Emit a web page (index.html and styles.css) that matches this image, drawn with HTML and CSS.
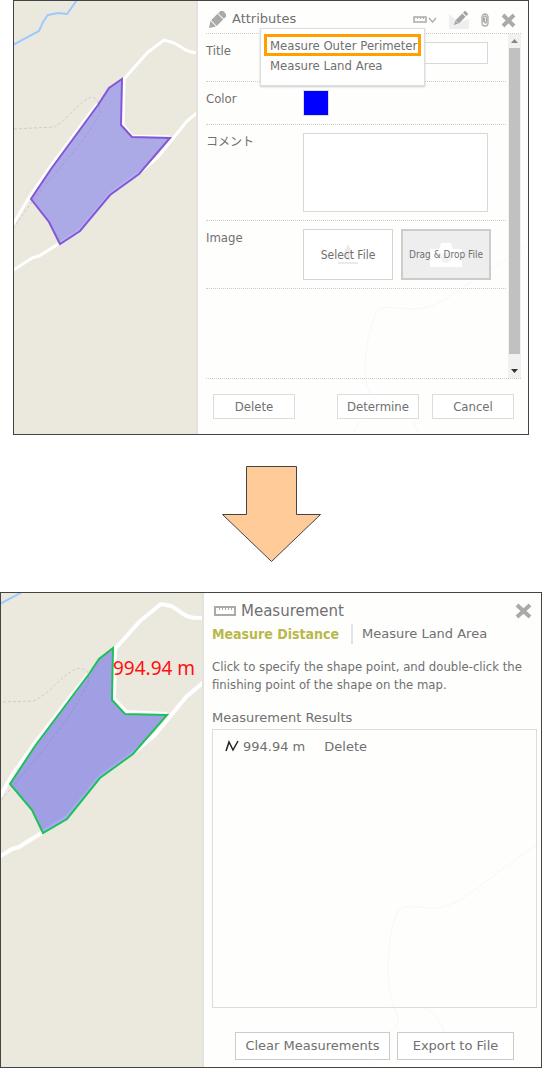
FILE: index.html
```html
<!DOCTYPE html>
<html lang="en">
<head>
<meta charset="utf-8">
<meta name="viewport" content="width=device-width, initial-scale=1">
<title>Attributes and Measurement</title>
<link rel="stylesheet" href="styles.css">
</head>
<body>
<main class="page">
  <section class="frame attributes">
    <svg class="map" viewBox="14 1 182 433" preserveAspectRatio="xMinYMin slice" role="img" aria-label="Map with the selected field">
      <path class="river" d="M13 45L39 31L43 22L48 15L58 13L67 14L77 0"/>
      <path class="road" d="M198 53C185 52 186 49 174 43L164 40L147 53L124 79L123 125L132 136L170 137"/>
      <path class="road" d="M12 226L30 196L50 167L97 104M12 271L32 258L39 256L60 243L80 230L110 194L139 173L158 157L187 121L198 112"/>
      <path class="trail" d="M14 129L54 127C66 121 80 101 91 97C99 98 100 106 100 112C88 142 43 181 14 228"/>
      <path class="field" d="M122 79L109 88L98 105L51 169L31 199L49 222L60 244L80 231L110 195L139 174L170 138L132 137L121 125Z"/>
    </svg>
    <div class="panel">
      <svg class="underlay" viewBox="198 1 330 433" preserveAspectRatio="xMinYMin slice" aria-hidden="true"><path d="M528 245L470 283C440 303 430 309 412 309C390 308 380 304 375 315C367 335 363 365 366 380L370 396M361 420L354 432M414 420L417 432"/></svg>
      <header class="panel-head">
        <svg width="18" height="18" viewBox="0 0 18 18" fill="#aaa"><g transform="translate(1 17) rotate(-45)"><path d="M0 0l6-4v8zM7-4h9v8H7zM17-4h4q1 0 1 1v6q0 1-1 1h-4z"/></g></svg>
        <h2 class="title">Attributes</h2>
        <div class="tools">
          <button class="tool" aria-label="Measure">
            <svg width="24" height="10" viewBox="0 0 24 10" fill="none" stroke="#aaa"><path d="M1 2h12v5H1z" stroke-width="1.500"/><path d="M4.500 2v2M7.500 2v2M10.500 2v2"/><path stroke-width="1.300" d="M16 3l3.500 4L23 3"/></svg>
          </button>
          <button class="tool" aria-label="Edit">
            <svg width="20" height="18" viewBox="0 0 20 18"><path fill="#efefef" d="M0 3l10 8L20 8v10H0z"/><g fill="#a4a4a4" transform="translate(5 14) rotate(-45)"><path d="M0 0l4-2v4zM4.500-2.300H14v4.600H4.500zM15-2.300h3v4.600h-3z"/></g></svg>
          </button>
          <button class="tool" aria-label="Attach">
            <svg width="8" height="14" viewBox="0 0 8 14" fill="none" stroke="#aaa"><path stroke-width="1.300" d="M2.500 9V4.500a1.500 1.500 0 0 1 3 0V9a1 1 0 0 1-2 0V5M1 4v6a3 3 0 0 0 6 0V4a3 3 0 0 0-6 0"/></svg>
          </button>
          <button class="tool" aria-label="Close">
            <svg width="15" height="15" viewBox="0 0 15 15" stroke="#aaa" stroke-width="4"><path d="M2 2l11 11M13 2L2 13"/></svg>
          </button>
        </div>
        <div class="menu">
          <button class="menu-item current">Measure Outer Perimeter</button>
          <button class="menu-item">Measure Land Area</button>
        </div>
      </header>
      <div class="scroller">
        <form class="rows">
          <div class="row row-title"><label for="f-title">Title</label><input class="text" id="f-title" type="text"></div>
          <div class="row row-color"><span>Color</span><button type="button" class="swatch" aria-label="Blue"></button></div>
          <div class="row row-comment"><label class="kana" for="f-comment" lang="ja">コメント</label><textarea class="text" id="f-comment"></textarea></div>
          <div class="row row-image"><span>Image</span>
            <div class="files">
              <button type="button" class="file">
                <svg class="file-bg" width="20" height="21" viewBox="0 0 20 21"><path fill="#ebebeb" d="M10 0l4 8h-2v8H8V8H6zM0 18h20v2H0z"/></svg>
                <span class="file-text">Select File</span>
              </button>
              <button type="button" class="file drop">
                <svg class="file-bg" width="32" height="24" viewBox="0 0 32 24"><path fill="#fff" d="M0 6h9l2-6h10l2 6h9v18H0z"/><circle cx="16" cy="15" r="5" fill="#f2f2f2"/></svg>
                <span class="file-text small">Drag &amp; Drop File</span>
              </button>
            </div>
          </div>
        </form>
        <div class="scrollbar">
          <svg width="13" height="14" viewBox="0 0 13 14"><path fill="#888" d="M3 9l3.500-4L10 9z"/></svg>
          <div class="thumb"></div>
          <svg width="13" height="14" viewBox="0 0 13 14"><path fill="#333" d="M3 5h7L6.500 9z"/></svg>
        </div>
      </div>
      <footer class="actions">
        <button class="btn">Delete</button>
        <button class="btn push">Determine</button>
        <button class="btn">Cancel</button>
      </footer>
    </div>
  </section>

  <svg class="arrow" width="101" height="98" viewBox="0 0 101 98"><path fill="#fc9" stroke="#444" d="M25.500 1.500h50v48h24L50.500 96.500 1.500 49.500h24z"/></svg>

  <section class="frame measurement">
    <div class="map-wrap">
      <svg class="map" viewBox="1 593 201 474" preserveAspectRatio="xMinYMin slice" role="img" aria-label="Map with the measured field">
        <path class="river" d="M0 604L24 591"/>
        <path class="road wide" d="M204 618C182 619 184 612 171 606L161 604L140 621L115 649L114 699L126 712L167 714"/>
        <path class="road wide" d="M-1 798L13 774L35 743L89 673M-1 857L12 849L19 847L43 832L67 817L100 777L133 753L154 736L186 697L204 682"/>
        <path class="trail" d="M3 702L33 701C48 696 65 671 79 668C88 669 90 675 88 683C68 726 28 766 1 801"/>
        <path class="field measured" d="M113 648L99 659L89 674L35 746L10 784L32 810L43 833L67 819L100 778L133 754L167 715L125 714L112 700Z"/>
      </svg>
      <span class="map-label">994.94 m</span>
    </div>
    <div class="panel">
      <svg class="underlay" viewBox="203 593 338 474" preserveAspectRatio="xMinYMin slice" aria-hidden="true"><path d="M541 841L500 870C470 893 455 906 435 908C410 908 400 902 395 915C386 940 384 985 393 1006C400 1020 398 1026 388 1032M424 1008C435 1013 440 1022 443 1032M374 1060L368 1067"/></svg>
      <header class="m-head">
        <svg width="22" height="10" viewBox="0 0 22 10" fill="none" stroke="#aaa"><path stroke-width="2" d="M1 1h20v8H1z"/><path d="M5.500 1v3M8.500 1v3M11.500 1v3M14.500 1v3M17.500 1v3"/></svg>
        <h2 class="m-title">Measurement</h2>
        <button class="tool m-close" aria-label="Close">
          <svg width="17" height="16" viewBox="0 0 17 16" stroke="#aaa" stroke-width="4"><path d="M2 2l13 12M15 2L2 14"/></svg>
        </button>
      </header>
      <nav class="tabs">
        <a class="tab active" href="#distance">Measure Distance</a>
        <a class="tab" href="#area">Measure Land Area</a>
      </nav>
      <p class="hint">Click to specify the shape point, and double-click the finishing point of the shape on the map.</p>
      <h3 class="m-sub">Measurement Results</h3>
      <div class="results">
        <div class="result">
          <svg width="14" height="14" viewBox="0 0 14 14" fill="none" stroke="#222" stroke-width="1.500"><path d="M1 11L4 2l4 8 5-9"/></svg>
          <span>994.94 m</span>
          <button class="link">Delete</button>
        </div>
      </div>
      <footer class="m-actions">
        <button class="btn big">Clear Measurements</button>
        <button class="btn big export">Export to File</button>
      </footer>
    </div>
  </section>
</main>
</body>
</html>
```
FILE: styles.css
```css
* { box-sizing: border-box; }

body {
  margin: 0;
  background: #fff;
  color: #707070;
  font: 13px/18px "DejaVu Sans Condensed", "DejaVu Sans", "Noto Sans CJK JP", sans-serif;
}

h2, h3, p { margin: 0; font-weight: normal; }
button, input, textarea { font: inherit; color: inherit; margin: 0; padding: 0; border-radius: 0; }
button { cursor: pointer; background: none; border: 0; }

.page { display: flex; flex-direction: column; }

.frame { display: flex; border: 1px solid #444; background: #fefefd; }
.attributes { margin: 0 13px; min-height: 435px; }
.measurement { min-height: 476px; }

.map { display: block; flex: none; width: 182px; height: auto; background: #ebe8de; }
.map path { fill: none; }
.map .river { stroke: #9ccaff; stroke-width: 2; }
.map .road { stroke: #fff; stroke-width: 3; stroke-linejoin: round; }
.map .wide { stroke-width: 4; }
.map .trail { stroke: #d0cdc2; stroke-dasharray: 3 2; }
.map .field { fill: #6464f0; fill-opacity: .47; stroke: #8457d6; stroke-width: 2; }
.map .measured { fill: #5555ea; fill-opacity: .5; stroke: #1ec05a; }

.panel { position: relative; z-index: 0; flex: 1; min-width: 0; display: flex; flex-direction: column; border-left: 2px solid #e4e1df; }
.underlay { position: absolute; inset: 0; z-index: -1; width: 100%; height: 100%; fill: none; stroke: #f7f7fd; }

.attributes .panel { padding: 0 7px 15px 8px; }
.panel-head { position: relative; display: flex; align-items: center; gap: 6px; height: 32px; padding: 6px 5px 0 2px; }
.title { padding-bottom: 2px; font: 13px/20px "DejaVu Sans", sans-serif; }
.tools { display: flex; align-items: center; gap: 12px; margin-left: auto; }
.tool { display: flex; }

.menu {
  position: absolute; top: 27px; left: 54px; z-index: 1;
  display: flex; flex-direction: column; align-items: flex-start;
  width: 165px; height: 58px; padding: 5px 3px;
  background: #fff; border: 1px solid #ddd; box-shadow: 0 1px 2px #ccc;
}
.menu-item { height: 19px; padding: 0 6px; white-space: nowrap; }
.menu-item.current { width: 157px; height: 22px; padding: 1px 3px 0; border: 3px solid #ffa000; line-height: 16px; text-align: left; }

.scroller { flex: 1; display: flex; border-top: 1px dotted #ccc; border-bottom: 1px dotted #ccc; }
.rows { flex: 1; padding-right: 2px; }
.row { display: grid; grid-template-columns: 97px 1fr; align-items: start; padding: 8px 0; border-bottom: 1px dotted #ccc; }
.row-title { height: 48px; }
.row-color { height: 43px; }
.row-comment { height: 96px; }
.row-image { height: 68px; }
.kana { font-size: 12px; }
.text { width: 185px; height: 22px; background: #fff; border: 1px solid #d8d8d8; }
textarea.text { height: 79px; resize: none; }
.swatch { width: 26px; height: 26px; background: #00f; border: 1px solid #ddd; }
.files { display: flex; gap: 8px; }
.file { display: grid; place-items: center; width: 90px; height: 51px; background: #fff; border: 1px solid #d4d4d4; font-size: 12px; }
.drop { background: #eee; border: 2px solid #ccc; }
.file-bg, .file-text { grid-area: 1 / 1; }
.small { font-size: 10px; }

.scrollbar { display: flex; flex-direction: column; width: 13px; background: #f1f1f1; }
.thumb { flex: 1; width: 11px; margin: 0 1px 10px; background: #c1c1c1; }

.actions { display: flex; gap: 13px; padding: 15px 7px 0; }
.btn { width: 82px; height: 25px; background: #fff; border: 1px solid #ddd; }
.push { margin-left: auto; }

.arrow { display: block; margin: 30px auto 29px; }

.map-wrap { position: relative; flex: none; display: flex; width: 201px; }
.map-wrap .map { width: 100%; }
.map-label { position: absolute; left: 112px; top: 64px; color: #f11; font: 19px/22px "Noto Sans", sans-serif; white-space: nowrap; }
.measurement .panel { padding: 6px 4px 7px 8px; font-family: "DejaVu Sans", sans-serif; }
.m-head { display: flex; align-items: center; gap: 5px; height: 23px; padding: 0 5px 0 2px; }
.m-title { font-size: 15px; }
.m-close { margin-left: auto; }
.tabs { display: flex; margin-top: 2px; line-height: 20px; }
.tab { color: inherit; text-decoration: none; }
.tab.active { width: 141px; margin-right: 9px; border-right: 2px solid #e2e2e2; color: #b8b84c; font: bold 14px/20px "DejaVu Sans Condensed", sans-serif; }
.hint { margin-top: 14px; font-family: "DejaVu Sans Condensed", sans-serif; }
.m-sub { margin-top: 15px; font-size: 13px; }
.results { flex: 1; margin-top: 2px; padding: 8px 12px; border: 1px solid #ddd; }
.result { display: flex; align-items: center; gap: 4px; }
.link { margin-left: 15px; }
.m-actions { display: flex; justify-content: flex-end; gap: 7px; padding: 24px 23px 0 0; }
.big { width: 155px; height: 28px; border-color: #ccc; }
.export { width: 117px; }
```
